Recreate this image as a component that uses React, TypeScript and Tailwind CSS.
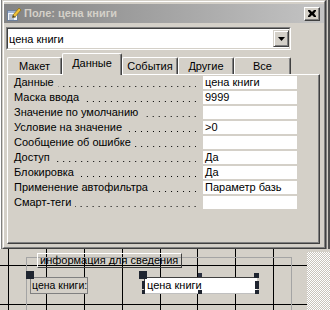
import React from "react";

const rows: [string, string][] = [
  ["Данные", "цена книги"],
  ["Маска ввода", "9999"],
  ["Значение по умолчанию", ""],
  ["Условие на значение", ">0"],
  ["Сообщение об ошибке", ""],
  ["Доступ", "Да"],
  ["Блокировка", "Да"],
  ["Применение автофильтра", "Параметр базь"],
  ["Смарт-теги", ""],
];

function TitleIcon() {
  return (
    <svg width="16" height="16" viewBox="0 0 16 16">
      <rect x="1.5" y="4.5" width="10" height="10" fill="#f4f7fb" stroke="#6d7f9a" />
      <rect x="2" y="5" width="9" height="2" fill="#9fb4d6" />
      <line x1="3" y1="9" x2="10" y2="9" stroke="#7a8cab" />
      <line x1="3" y1="11" x2="10" y2="11" stroke="#7a8cab" />
      <line x1="3" y1="13" x2="8" y2="13" stroke="#7a8cab" />
      <polygon points="7,9 13,2 15,4 9,11 6.5,11.5" fill="#f2c23a" stroke="#8a6a10" strokeWidth="0.7" />
      <polygon points="6.5,11.5 7,9 9,11" fill="#3a3a3a" />
    </svg>
  );
}

function Tab({ label, w, active }: { label: string; w: string; active?: boolean }) {
  if (active) {
    return (
      <div
        className={`${w} relative z-10 -mb-px flex h-[22px] justify-center rounded-t-[2px] border-l border-t border-r border-l-white border-t-white border-r-[#404040] bg-[#d4d0c8] pt-[3px] shadow-[inset_-1px_0_#808080]`}
      >
        {label}
      </div>
    );
  }
  return (
    <div
      className={`${w} flex h-[17px] justify-center rounded-t-[2px] border-l border-t border-r border-l-white border-t-white border-r-[#404040] bg-[#d4d0c8] pt-[2px] shadow-[inset_-1px_0_#808080]`}
    >
      {label}
    </div>
  );
}

function Dialog() {
  return (
    <div className="h-[249px] w-[324px] border border-t-[#d4d0c8] border-l-[#d4d0c8] border-r-[#404040] border-b-[#404040]">
      <div className="flex h-full flex-col border border-t-white border-l-white border-r-[#808080] border-b-[#808080] pt-[2px]">
        {/* title bar */}
        <div className="flex h-[19px] items-center bg-linear-to-r from-[#848484] to-[#c4c4c4]">
          <div className="ml-[2px] flex h-[16px] w-[16px]">
            <TitleIcon />
          </div>
          <span className="ml-[2px] font-bold text-[#d4d0c8]">Поле: цена книги</span>
          <div className="ml-auto mr-[4px] flex h-[14px] w-[16px] items-center justify-center border border-t-white border-l-white border-r-[#404040] border-b-[#404040] bg-[#d4d0c8] shadow-[inset_-1px_-1px_#808080]">
            <svg width="8" height="7" viewBox="0 0 8 7" className="-mt-px -ml-px">
              <path d="M0 0h2l2 2 2-2h2v1L6 3.5 8 6v1H6L4 5 2 7H0V6l2-2.5L0 1z" fill="#000" />
            </svg>
          </div>
        </div>

        {/* combo */}
        <div className="ml-[2px] mt-[4px] h-[23px] w-[285px] border border-t-[#808080] border-l-[#808080] border-r-white border-b-white">
          <div className="flex h-full items-center border border-t-[#404040] border-l-[#404040] border-r-[#d4d0c8] border-b-[#d4d0c8] bg-white">
            <span className="pl-[1px] pt-[1px]">цена книги</span>
            <div className="ml-auto mr-0 flex h-[17px] w-[16px] items-center justify-center border border-t-[#d4d0c8] border-l-[#d4d0c8] border-r-[#404040] border-b-[#404040] bg-[#d4d0c8] shadow-[inset_1px_1px_white,inset_-1px_-1px_#808080]">
              <svg width="7" height="4" viewBox="0 0 7 4">
                <polygon points="0,0 7,0 3.5,4" fill="#000" />
              </svg>
            </div>
          </div>
        </div>

        {/* tabs */}
        <div className="ml-[3px] mt-[3px] flex h-[21px] items-end">
          <Tab label="Макет" w="w-[55px]" />
          <Tab label="Данные" w="w-[60px]" active />
          <Tab label="События" w="w-[56px]" />
          <Tab label="Другие" w="w-[56px]" />
          <Tab label="Все" w="w-[57px]" />
        </div>

        {/* panel */}
        <div className="ml-[3px] flex h-[170px] w-[313px] flex-col border border-t-white border-l-white border-r-[#404040] border-b-[#404040] pl-[6px] pt-[1px] shadow-[inset_-1px_-1px_#808080]">
          {rows.map(([label, value]) => (
            <div key={label} className="flex h-[15px] items-start">
              <div className="flex h-[13px] w-[182px] items-end">
                <span className="self-center whitespace-nowrap">{label}</span>
                <span className="mb-[2px] ml-[4px] h-px min-w-0 flex-1 bg-[linear-gradient(to_left,#000_1px,transparent_1px)] bg-repeat-x [background-position:right_top] [background-size:6px_1px]" />
              </div>
              <div className="ml-[7px] flex h-[13px] w-[94px] items-center overflow-hidden whitespace-nowrap bg-white pl-[2px]">
                {value}
              </div>
            </div>
          ))}
        </div>
      </div>
    </div>
  );
}

function Canvas() {
  const vx = [8, 46, 84, 122, 160, 197, 235, 273];
  return (
    <div className="relative h-[61px] w-[330px]">
      <svg className="absolute left-0 top-0" width="307" height="61">
        {[16, 55].map((y) => (
          <line key={y} x1="0" x2="307" y1={y + 0.5} y2={y + 0.5} stroke="#000" />
        ))}
        {vx.map((x) => (
          <line key={x} x1={x + 0.5} x2={x + 0.5} y1="0" y2="61" stroke="#000" />
        ))}
      </svg>
      {/* hatched area outside the form */}
      <div className="absolute bottom-0 left-[307px] right-0 top-[3px] bg-[repeating-conic-gradient(#ffffff_0_25%,#c8c4bc_0_50%)] [background-size:2px_2px]" />
      {/* section selection outline */}
      <div className="absolute left-[26px] top-[8px] h-[60px] w-[266px] border-l border-t border-r border-[#a4a4a4]" />
      {/* info label */}
      <div className="absolute left-[37px] top-[4px] h-[15px] w-[145px] whitespace-nowrap border border-t-white border-l-white border-r-[#404040] border-b-[#404040] pl-[2px] leading-[13px]">
        информация для сведения
      </div>
      {/* label with handle */}
      <div className="absolute left-[30px] top-[28px] flex h-[17px] w-[58px] items-center overflow-hidden whitespace-nowrap border border-[#808080] bg-[#d4d0c8] pl-px text-[10.5px]">
        цена книги:
      </div>
      <div className="absolute left-[26px] top-[22px] h-[8px] w-[8px] bg-[#1f2530]" />
      {/* selected text box */}
      <div className="absolute left-[144px] top-[28px] flex h-[17px] w-[114px] items-center whitespace-nowrap border border-t-[#404040] border-l-[#404040] border-r-[#d4d0c8] border-b-[#c0c0c0] bg-white pl-[2px]">
        цена книги
      </div>
      <div className="absolute left-[139px] top-[22px] h-[8px] w-[8px] bg-[#1f2530]" />
      <div className="absolute left-[198px] top-[24px] h-[4px] w-[4px] bg-[#2a3040]" />
      <div className="absolute left-[254px] top-[24px] h-[5px] w-[5px] bg-[#1f2530]" />
      <div className="absolute left-[255px] top-[32px] h-[8px] w-[4px] bg-[#1f2530]" />
      <div className="absolute left-[255px] top-[41px] h-[4px] w-[4px] bg-[#1f2530]" />
      <div className="absolute left-[198px] top-[41px] h-[4px] w-[4px] bg-[#1f2530]" />
      <div className="absolute left-[142px] top-[32px] h-[8px] w-[3px] bg-[#1f2530]" />
      <div className="absolute left-[142px] top-[41px] h-[4px] w-[3px] bg-[#1f2530]" />
    </div>
  );
}

export default function App() {
  return (
    <div className="h-[310px] w-[330px] overflow-hidden bg-[#d4d0c8] font-['Liberation_Sans',Arial,sans-serif] text-[11px] leading-[13px] text-black">
      <div className="flex h-[249px]">
        <div className="flex w-[2px]">
          <div className="w-px bg-white" />
          <div className="w-px bg-[#808080]" />
        </div>
        <Dialog />
        <div className="flex w-[4px]">
          <div className="w-px bg-[#808080]" />
          <div className="w-px bg-[#d4d0c8]" />
          <div className="w-[2px] bg-[#505050]" />
        </div>
      </div>
      <Canvas />
    </div>
  );
}
